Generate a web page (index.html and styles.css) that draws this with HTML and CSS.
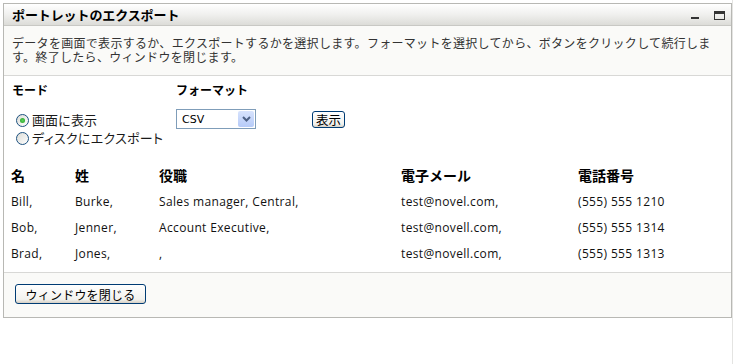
FILE: index.html
```html
<!DOCTYPE html>
<html>
<head>
	<link rel="stylesheet" href="styles.css">
	<title>ポートレットのエクスポート</title>
</head>
<body>
	<div class="page">
		<div class="portlet">
			<div class="titlebar">
				<span class="title">ポートレットのエクスポート</span>
				<span class="winIcons">
					<span class="iconMin"></span>
					<span class="iconMax"></span>
				</span>
			</div>
			<div class="desc">データを画面で表示するか、エクスポートするかを選択します。フォーマットを選択してから、ボタンをクリックして続行します。終了したら、ウィンドウを閉じます。</div>
			<div class="options">
				<div class="optLabel">モード</div>
				<div class="optLabel">フォーマット</div>
				<div></div>
				<div class="modes">
					<label class="radio"><span class="radioDot checked"></span>画面に表示</label>
					<label class="radio"><span class="radioDot"></span><span class="palt">ディスクにエクスポート</span></label>
				</div>
				<div>
					<div class="select">
						<span>CSV</span>
						<span class="selectBtn">
							<svg width="9" height="6" viewBox="0 0 9 6"><path d="M1 1 L4.5 4.5 L8 1" fill="none" stroke="#4d6185" stroke-width="2"/></svg>
						</span>
					</div>
				</div>
				<div>
					<div class="xpButton showBtn">表示</div>
				</div>
			</div>
			<div class="dataTable">
				<div class="th">名</div><div class="th">姓</div><div class="th">役職</div><div class="th">電子メール</div><div class="th">電話番号</div>
				<div class="td">Bill,</div><div class="td">Burke,</div><div class="td">Sales manager, Central,</div><div class="td">test@novel.com,</div><div class="td">(555) 555 1210</div>
				<div class="td">Bob,</div><div class="td">Jenner,</div><div class="td">Account Executive,</div><div class="td">test@novell.com,</div><div class="td">(555) 555 1314</div>
				<div class="td">Brad,</div><div class="td">Jones,</div><div class="td">,</div><div class="td">test@novell.com,</div><div class="td">(555) 555 1313</div>
			</div>
			<div class="footer">
				<div class="xpButton closeBtn">ウィンドウを閉じる</div>
			</div>
		</div>
	</div>
</body>
</html>
```

FILE: styles.css
```css
body{
	margin: 0;
	background-color: white;
	font-family: "Noto Sans CJK JP", sans-serif;
	color: #1a1a1a;
}
.page{
	width: 733px;
	height: 364px;
	padding: 3px 0 0 3px;
	box-sizing: border-box;
	border-right: 1px solid #e4e4e2;
}
.portlet{
	width: 727px;
	border: 1px solid #b8b8b4;
	background-color: white;
}
.titlebar{
	height: 21px;
	display: flex;
	align-items: center;
	justify-content: space-between;
	padding: 0 6px 0 8px;
	background: linear-gradient(#ffffff, #f0f0ee 50%, #dcdcd8);
	border-bottom: 1px solid #c8c8c4;
}
.title{
	font-size: 13px;
	font-weight: bold;
	color: black;
	letter-spacing: -0.1px;
}
.winIcons{
	display: flex;
	align-items: flex-end;
	gap: 15px;
	padding-top: 2px;
}
.iconMin{
	width: 8px;
	height: 2px;
	background-color: #333;
	margin-bottom: 1px;
}
.iconMax{
	width: 9px;
	height: 5px;
	border: 1px solid #333;
	border-top-width: 3px;
}
.desc{
	background-color: #fafaf8;
	padding: 10px 10px 11px 8px;
	font-size: 12px;
	line-height: 14px;
	letter-spacing: 0.3px;
	line-break: strict;
	color: #333;
	border-bottom: 1px solid #d8d8d6;
}
.options{
	display: grid;
	grid-template-columns: 164px 136px auto;
	row-gap: 11px;
	padding: 6px 8px 0;
}
.optLabel{
	font-size: 12px;
	font-weight: bold;
	line-height: 16px;
	color: black;
}
.modes{
	margin-left: 4px;
	padding-top: 2px;
}
.radio{
	display: flex;
	align-items: center;
	font-size: 13px;
	line-height: 18px;
}
.palt{
	font-feature-settings: "palt";
	letter-spacing: 0.3px;
}
.radioDot{
	width: 13px;
	height: 13px;
	border: 1px solid #1c5180;
	border-radius: 50%;
	background: linear-gradient(135deg, #dcdcd6, #ffffff);
	margin-right: 3px;
	display: flex;
	align-items: center;
	justify-content: center;
	box-sizing: border-box;
}
.radioDot.checked::after{
	content: "";
	width: 5px;
	height: 5px;
	border-radius: 50%;
	background: radial-gradient(#5cd05c, #21a121);
}
.select{
	width: 80px;
	height: 20px;
	box-sizing: border-box;
	border: 1px solid #7f9db9;
	display: flex;
	align-items: center;
	justify-content: space-between;
	padding: 0 1px 0 5px;
	font-family: "DejaVu Sans", sans-serif;
	font-size: 11px;
	color: black;
}
.selectBtn{
	width: 16px;
	height: 16px;
	border-radius: 2px;
	background: linear-gradient(#d7e3fd, #b6cbf8);
	display: flex;
	align-items: center;
	justify-content: center;
}
.xpButton{
	box-sizing: border-box;
	border: 1px solid #003c74;
	border-radius: 3px;
	background: linear-gradient(#ffffff, #f2f2ee 80%, #d6d0c5);
	color: black;
	display: flex;
	align-items: center;
	justify-content: center;
	font-size: 12px;
	cursor: pointer;
}
.showBtn{
	width: 33px;
	height: 17px;
	margin-top: 2px;
	font-size: 12.5px;
}
.closeBtn{
	width: 131px;
	height: 20px;
	letter-spacing: 0.2px;
}
.dataTable{
	display: grid;
	grid-template-columns: 64px 84px 242px 177px auto;
	grid-auto-rows: 26px;
	align-items: center;
	padding: 15px 0 0 7px;
	margin-bottom: 6px;
}
.th{
	font-size: 14px;
	font-weight: bold;
	color: black;
}
.td{
	font-family: "Open Sans", sans-serif;
	font-size: 12px;
	letter-spacing: 0.35px;
	color: #111;
}
.footer{
	border-top: 1px solid #d8d8d6;
	background-color: #fafaf8;
	padding: 11px 11px 13px;
}
```
